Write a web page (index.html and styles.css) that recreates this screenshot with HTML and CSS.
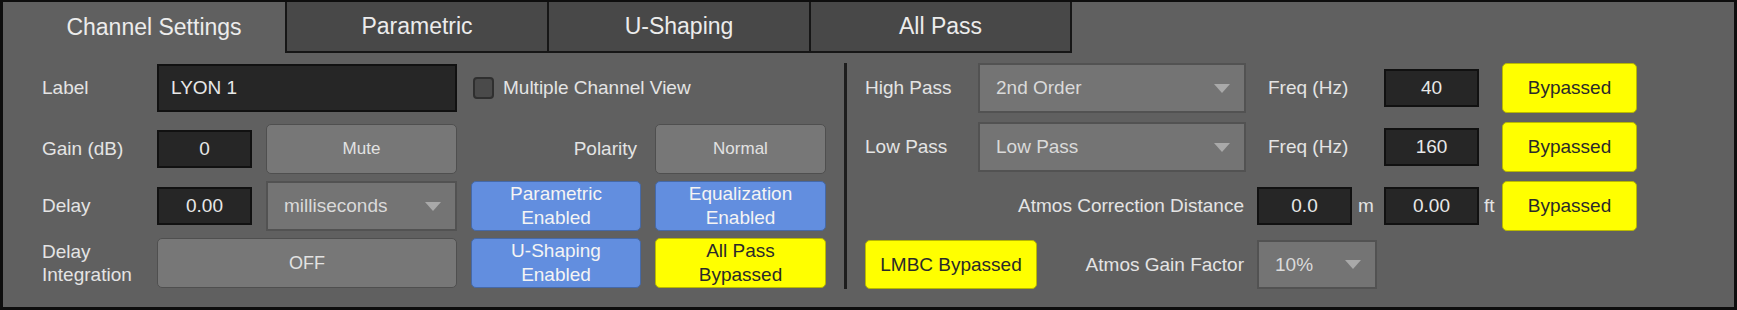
FILE: index.html
```html
<!DOCTYPE html>
<html lang="en">
<head>
    <meta charset="UTF-8">
    <meta name="viewport" content="width=device-width, initial-scale=1.0">
    <title>Channel Settings</title>
    <link rel="stylesheet" href="styles.css">
</head>
<body>

<div class="frame">
    <!-- Onglets -->
    <div class="tabs">
        <div class="tab active">Channel Settings</div>
        <div class="tab">Parametric</div>
        <div class="tab">U-Shaping</div>
        <div class="tab last">All Pass</div>
    </div>

    <div class="panel">
        <!-- Partie gauche -->
        <div class="left">
            <div class="lbl top">Label</div>
            <div class="field name top">LYON 1</div>
            <div class="check top"><span class="box"></span>Multiple Channel View</div>

            <div class="lbl">Gain (dB)</div>
            <div class="field num">0</div>
            <div class="btn grey">Mute</div>
            <div class="lbl end">Polarity</div>
            <div class="btn grey">Normal</div>

            <div class="lbl">Delay</div>
            <div class="field num">0.00</div>
            <div class="select">milliseconds<span class="arrow"></span></div>
            <div class="btn blue">Parametric<br>Enabled</div>
            <div class="btn blue">Equalization<br>Enabled</div>

            <div class="lbl two">Delay<br>Integration</div>
            <div class="btn grey off">OFF</div>
            <div class="btn blue">U-Shaping<br>Enabled</div>
            <div class="btn yellow">All Pass<br>Bypassed</div>
        </div>

        <div class="divider"></div>

        <!-- Partie droite -->
        <div class="right">
            <div class="lbl">High Pass</div>
            <div class="select">2nd Order<span class="arrow"></span></div>
            <div class="lbl freq">Freq (Hz)</div>
            <div class="field num small c6">40</div>
            <div class="btn yellow c8">Bypassed</div>

            <div class="lbl">Low Pass</div>
            <div class="select">Low Pass<span class="arrow"></span></div>
            <div class="lbl freq">Freq (Hz)</div>
            <div class="field num small c6">160</div>
            <div class="btn yellow c8">Bypassed</div>

            <div class="lbl atmos">Atmos Correction Distance</div>
            <div class="field num small c4">0.0</div>
            <div class="lbl unit c5">m</div>
            <div class="field num small c6">0.00</div>
            <div class="lbl unit c7">ft</div>
            <div class="btn yellow c8">Bypassed</div>

            <div class="lmbc-row">
                <div class="btn yellow lmbc">LMBC Bypassed</div>
                <div class="lbl">Atmos Gain Factor</div>
            </div>
            <div class="select gain">10%<span class="arrow"></span></div>
        </div>
    </div>
</div>

</body>
</html>
```

FILE: styles.css
```css
body {
    margin: 0;
    padding: 0;
    background-color: #606060;
    font-family: "Liberation Sans", Arial, sans-serif;
    color: #e4e4e4;
}
.frame {
    width: 1737px;
    height: 310px;
    box-sizing: border-box;
    border: 3px solid #0e0e0e;
    border-top-width: 2px;
    background-color: #606060;
}
/* Onglets */
.tabs {
    display: flex;
    height: 51px;
    padding-left: 20px;
}
.tab {
    width: 262px;
    box-sizing: border-box;
    display: flex;
    align-items: center;
    justify-content: center;
    font-size: 23px;
    color: #ececec;
    background-color: #484848;
    border-left: 2px solid #161616;
    border-bottom: 2px solid #161616;
}
.tab.active {
    background-color: #606060;
    border: none;
}
.tab.last {
    width: 263px;
    border-right: 2px solid #161616;
}
.panel {
    display: flex;
    align-items: flex-start;
    padding: 10px 0 0 39px;
}
/* Grille de gauche */
.left {
    display: grid;
    grid-template-columns: 101px 95px 191px 170px 171px;
    grid-template-rows: 53px 50px 50px 50px;
    column-gap: 14px;
    row-gap: 7px;
    margin-top: 1px;
}
.lbl {
    display: flex;
    align-items: center;
    font-size: 19px;
    white-space: nowrap;
}
.lbl.two {
    line-height: 23px;
}
.lbl.end {
    justify-content: flex-end;
    padding-right: 4px;
}
.top {
    height: 48px;
    align-self: start;
}
.field {
    box-sizing: border-box;
    background-color: #262626;
    border: 2px solid #111;
    font-size: 19px;
    color: #e8e8e8;
    display: flex;
    align-items: center;
}
.field.name {
    grid-column: 2 / 4;
    padding-left: 12px;
}
.field.num {
    height: 38px;
    align-self: center;
    justify-content: center;
}
.check {
    grid-column: 4 / 6;
    display: flex;
    align-items: center;
    font-size: 19px;
    padding-left: 2px;
}
.box {
    width: 21px;
    height: 22px;
    box-sizing: border-box;
    border: 2px solid #2f2f2f;
    border-radius: 4px;
    background-color: #4a4a4a;
    margin-right: 9px;
}
.btn {
    box-sizing: border-box;
    display: flex;
    align-items: center;
    justify-content: center;
    text-align: center;
    border-radius: 5px;
    font-size: 19px;
    line-height: 24px;
}
.btn.grey {
    background-color: #777;
    border: 1px solid #4f4f4f;
    font-size: 17px;
    color: #e2e2e2;
}
.btn.off {
    grid-column: 2 / 4;
    font-size: 18px;
}
.btn.blue {
    background-color: #628edf;
    border: 1px solid #4569a8;
    color: #f4f4f4;
}
.btn.yellow {
    background-color: #ffff00;
    border: 1px solid #b8b800;
    color: #2a2a2a;
}
.select {
    box-sizing: border-box;
    display: flex;
    align-items: center;
    background-color: #747474;
    border: 2px solid #525252;
    padding: 0 14px 0 16px;
    font-size: 19px;
    color: #dadada;
}
.arrow {
    margin-left: auto;
    width: 0;
    height: 0;
    border-left: 8.5px solid transparent;
    border-right: 8.5px solid transparent;
    border-top: 9px solid #a9a9a9;
}
.divider {
    width: 3px;
    height: 226px;
    margin-left: 18px;
    background-color: #1d1d1d;
}
/* Grille de droite */
.right {
    display: grid;
    grid-template-columns: 113px 268px 11px 95px 32px 95px 23px 135px;
    grid-template-rows: 50px 50px 50px 49px;
    row-gap: 9px;
    margin-left: 18px;
}
.lbl.freq {
    grid-column: 3 / 6;
    padding-left: 22px;
}
.field.small {
    width: 95px;
}
.c4 { grid-column: 4; }
.c5 { grid-column: 5; }
.c6 { grid-column: 6; }
.c7 { grid-column: 7; }
.c8 { grid-column: 8; }
.lbl.atmos {
    grid-column: 1 / 3;
    justify-content: flex-end;
    padding-right: 2px;
}
.lbl.unit.c5 {
    padding-left: 6px;
}
.lbl.unit.c7 {
    padding-left: 5px;
}
.lmbc-row {
    grid-column: 1 / 3;
    display: flex;
    align-items: center;
    justify-content: space-between;
    padding-right: 2px;
}
.btn.lmbc {
    width: 172px;
    height: 49px;
}
.select.gain {
    grid-column: 4 / 7;
    width: 120px;
}
```
